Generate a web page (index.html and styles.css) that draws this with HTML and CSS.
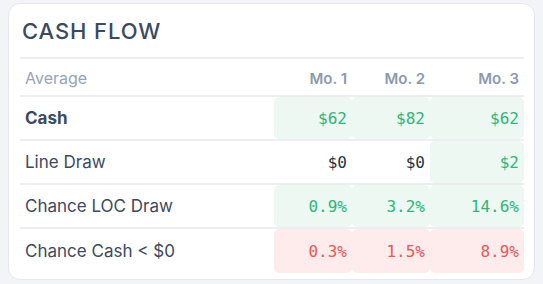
FILE: index.html
```html
<!DOCTYPE html>
<html>
<head>
<meta charset="utf-8">
<link rel="stylesheet" href="styles.css">
</head>
<body>
<div class="card">
  <div class="title">CASH FLOW</div>
  <div class="row head">
    <div class="label muted">Average</div>
    <div class="cell">Mo. 1</div>
    <div class="cell">Mo. 2</div>
    <div class="cell">Mo. 3</div>
  </div>
  <div class="row">
    <div class="label bold">Cash</div>
    <div class="cell num good">$62</div>
    <div class="cell num good">$82</div>
    <div class="cell num good">$62</div>
  </div>
  <div class="row">
    <div class="label">Line Draw</div>
    <div class="cell num">$0</div>
    <div class="cell num">$0</div>
    <div class="cell num good">$2</div>
  </div>
  <div class="row">
    <div class="label">Chance LOC Draw</div>
    <div class="cell num good">0.9%</div>
    <div class="cell num good">3.2%</div>
    <div class="cell num good">14.6%</div>
  </div>
  <div class="row last">
    <div class="label">Chance Cash &lt; $0</div>
    <div class="cell num bad">0.3%</div>
    <div class="cell num bad">1.5%</div>
    <div class="cell num bad">8.9%</div>
  </div>
</div>
</body>
</html>
```
FILE: styles.css
```css
html, body {
  margin: 0;
  padding: 0;
  background: #f2f4f8;
}
body {
  padding: 3px 0 0 8px;
  font-family: Inter, "Noto Sans", sans-serif;
}
.card {
  box-sizing: border-box;
  width: 527px;
  height: 277px;
  background: #ffffff;
  border: 1px solid #e4e7ed;
  border-radius: 12px;
  padding: 0 10px 0 11px;
}
.title {
  height: 55px;
  box-sizing: border-box;
  padding: 14px 0 0 2px;
  font-size: 22px;
  font-weight: 500;
  letter-spacing: 0.9px;
  color: #3c4a5f;
  border-bottom: 2px solid #eceef3;
  line-height: 26px;
}
.row {
  display: grid;
  grid-template-columns: 254px 78px 78px 94px;
  height: 42px;
  border-bottom: 2px solid #eceef3;
}
.row.head {
  height: 36px;
}
.row.last {
  height: 44px;
  border-bottom: none;
}
.label {
  display: flex;
  align-items: center;
  padding-left: 5px;
  font-size: 17px;
  color: #3c4a5f;
}
.label.bold {
  font-weight: 700;
}
.label.muted {
  color: #97a4b8;
  font-size: 16px;
  padding-top: 2px;
}
.cell {
  display: flex;
  align-items: center;
  justify-content: flex-end;
  padding-right: 5px;
  border-radius: 5px;
  font-size: 15px;
  font-weight: 600;
  color: #8d99ad;
}
.head .cell {
  padding-top: 2px;
}
.num {
  font-family: "DejaVu Sans Mono", "Liberation Mono", monospace;
  font-weight: 400;
  font-size: 16px;
  color: #273244;
}
.good {
  background: #ecf8f1;
  color: #2fb67c;
}
.bad {
  background: #fdeceb;
  color: #ec5757;
}
```
